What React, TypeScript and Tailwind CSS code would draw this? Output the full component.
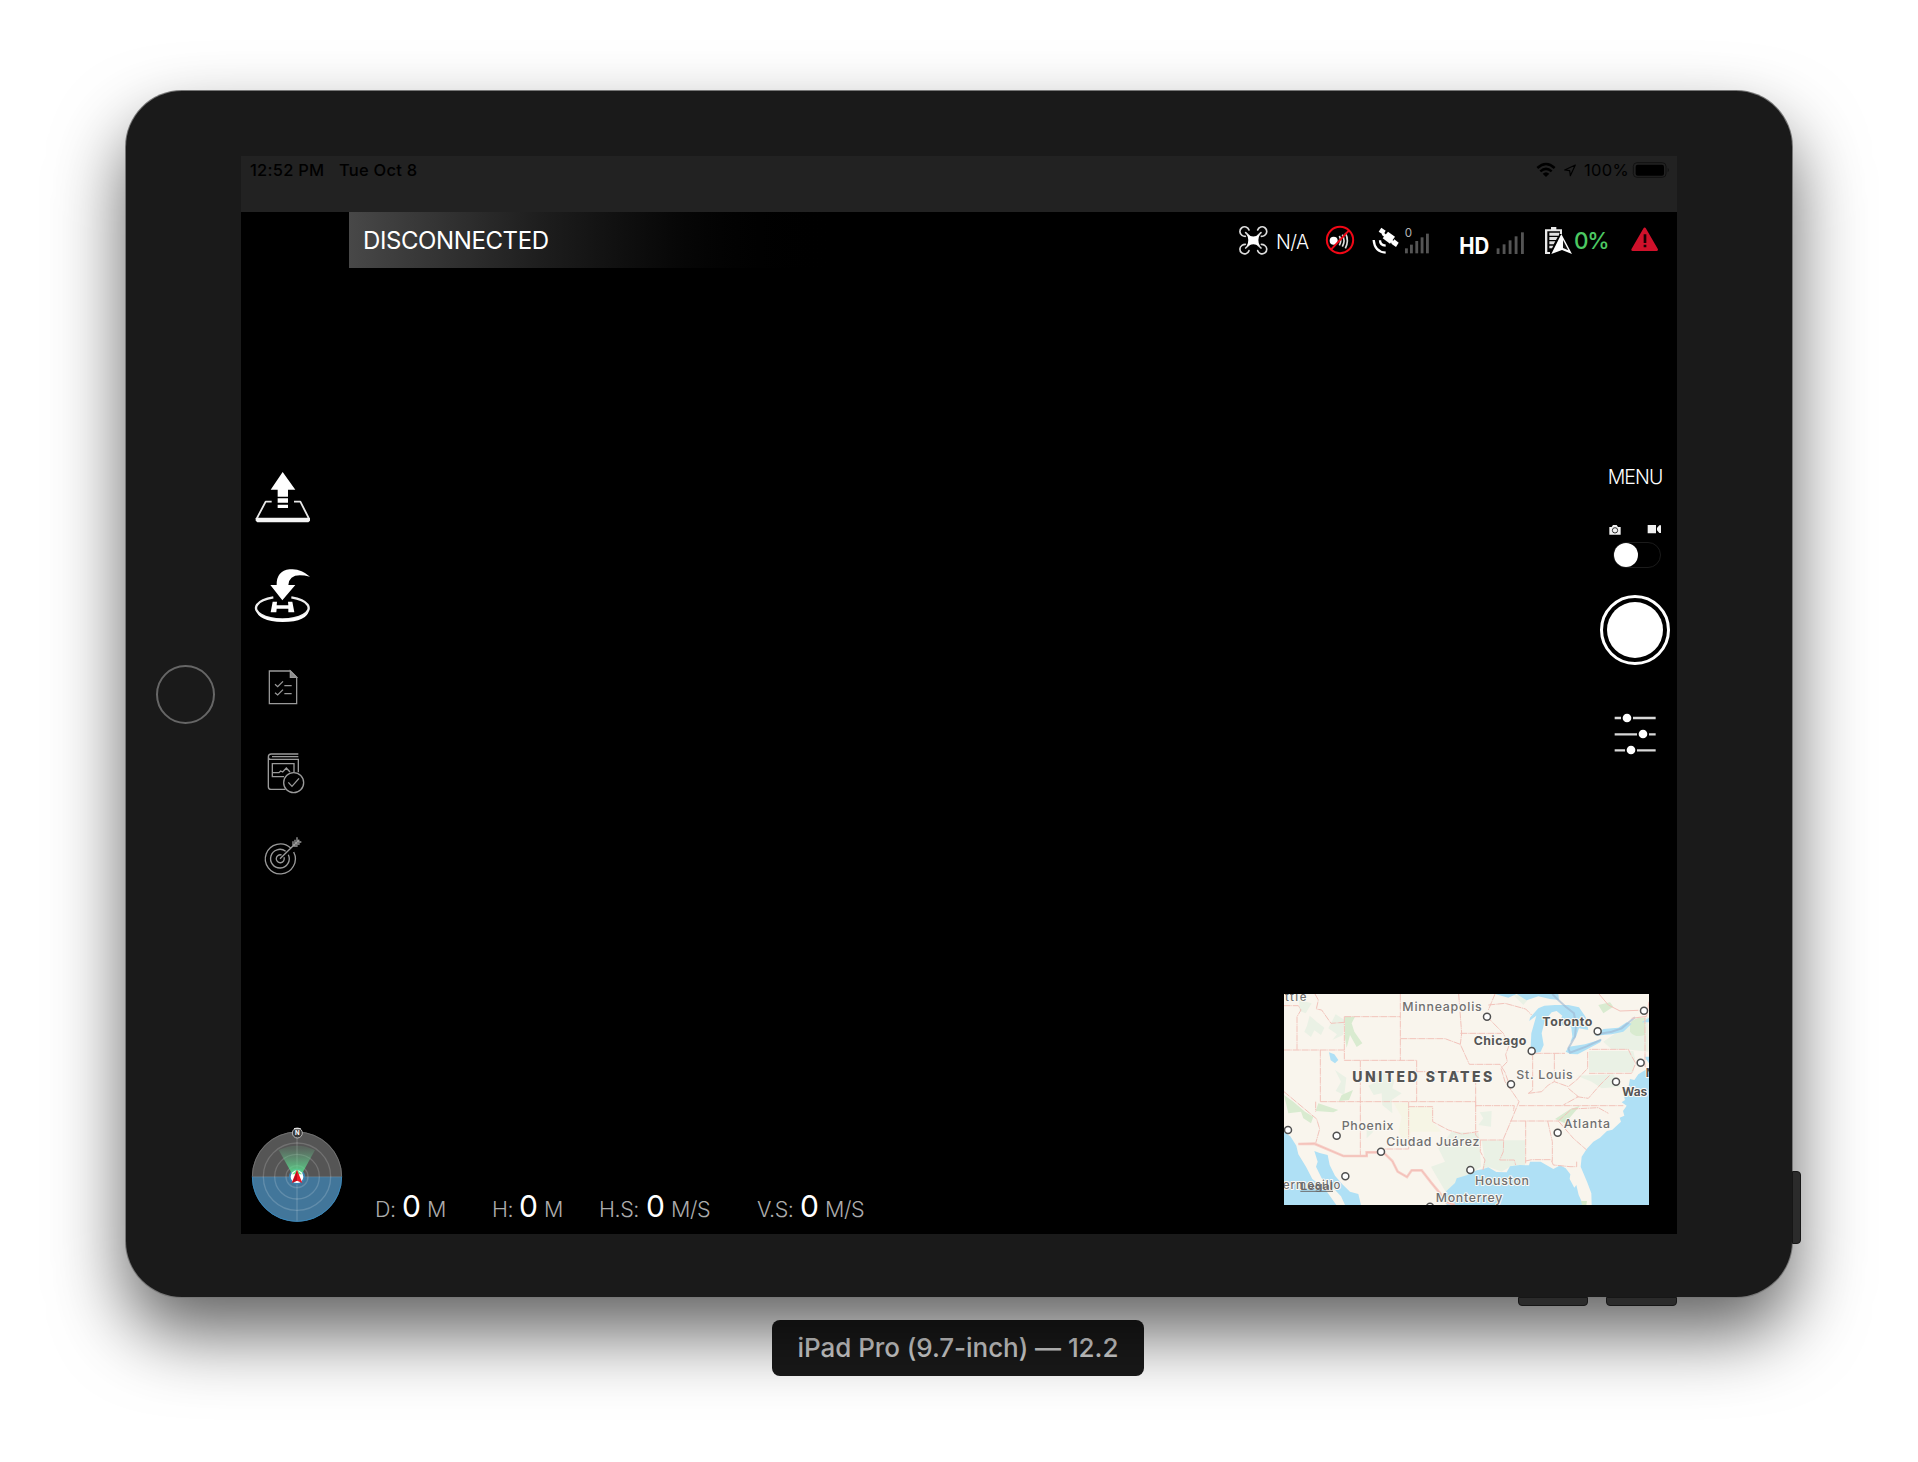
import React from "react";

function StatusBar() {
  return (
    <div className="flex h-14 items-start justify-between bg-[#222222] text-[16.5px] leading-[28px] font-medium text-black">
      <div className="flex gap-[14px] pl-[9px] tracking-[0.25px]">
        <span className="w-[75px] whitespace-nowrap">12:52 PM</span>
        <span className="whitespace-nowrap">Tue Oct 8</span>
      </div>
      <div className="flex">
        <svg width="50" height="28" viewBox="252 18 150 84" fill="none">
          <g stroke="#000" strokeWidth="7.5">
            <path d="M262 54 Q288 30 314 54" />
            <path d="M271 64 Q288 49 305 64" />
          </g>
          <path d="M278 71 Q288 62 298 71 L288 81Z" fill="#000" />
          <path d="M376 45 L344 60 L359 62 L361 77Z" stroke="#000" strokeWidth="3.5" strokeLinejoin="round" />
        </svg>
        <span className="w-[46px] whitespace-nowrap font-normal tracking-[0.3px]">100%</span>
        <svg width="47" height="28" viewBox="540 18 141 84" fill="none">
          <rect x="550" y="38" width="98" height="44" rx="11" stroke="#111" strokeWidth="3" />
          <rect x="557" y="44" width="85" height="33" rx="6" fill="#000" />
          <path d="M653 53 Q660 60 653 67Z" fill="#111" />
        </svg>
      </div>
    </div>
  );
}

function Bars({ items, base, fill }: { items: [number, number][]; base: number; fill: string }) {
  return (
    <g fill={fill}>
      {items.map(([x, y]) => (
        <rect key={x} x={x} y={y} width="8.5" height={base - y} />
      ))}
    </g>
  );
}

function Header() {
  return (
    <div className="flex h-14 justify-between">
      <div className="flex w-[500px] items-center bg-linear-to-r from-[#484848] via-[#1c1c1c] via-40% to-black pt-px pl-[14px] text-[24px] text-white">
        <span className="tracking-[-0.4px]">DISCONNECTED</span>
      </div>
      <div className="flex w-[441px]">
        <svg width="36" height="56" viewBox="48 6 108 168" fill="none">
          <g stroke="#dcdcdc" strokeWidth="5" strokeLinecap="round">
            <path d="M66 76 A14 14 0 1 1 87 60 M77 68 L92 82 M66 76 Q70 79 76 79" />
            <path d="M134 76 A14 14 0 1 0 113 60 M123 68 L108 82 M134 76 Q130 79 124 79" />
            <path d="M66 106 A14 14 0 1 0 87 122 M77 114 L92 100 M66 106 Q70 103 76 103" />
            <path d="M134 106 A14 14 0 1 1 113 122 M123 114 L108 100 M134 106 Q130 103 124 103" />
          </g>
          <path d="M80 73 Q100 86 120 73 Q110 91 120 109 Q100 97 80 109 Q90 91 80 73Z" fill="#fff" />
        </svg>
        <span className="w-[46px] pl-[4px] pt-[15px] text-[19.5px] leading-[30px] font-light tracking-[-0.6px] text-white">N/A</span>
        <svg width="44" height="56" viewBox="294 6 132 168" fill="none">
          <circle cx="341" cy="92" r="12" fill="#fff" />
          <path d="M358 78 Q366 92 358 106 M367 74 Q377 92 367 110 M376 69 Q388 92 376 115" stroke="#ddd" strokeWidth="5" />
          <circle cx="360" cy="90" r="39.5" stroke="#f00816" strokeWidth="6" />
          <path d="M387 61 L333 119" stroke="#f00816" strokeWidth="6" />
        </svg>
        <svg width="40" height="56" viewBox="426 6 120 168" fill="none">
          <g fill="#fff">
            <path d="M484 53 L497 62 L490 74 L476 65Z" />
            <path d="M504 65 L525 80 L510 101 L488 85Z" />
            <path d="M523 88 L536 98 L528 111 L514 101Z" />
            <path d="M490 67 L524 96 L518 102 L485 74Z" />
          </g>
          <path d="M480 91 Q480 106 497 107 M461 90 Q464 126 497 128" stroke="#fff" strokeWidth="7" />
        </svg>
        <svg width="34" height="56" viewBox="546 6 102 168">
          <text x="554" y="82" fill="#b4b4b4" fontSize="36" textLength="22" lengthAdjust="spacingAndGlyphs">0</text>
          <Bars items={[[555, 115], [570, 104], [586, 93], [602, 82], [618, 71]]} base={130} fill="#545454" />
        </svg>
        <svg width="56" height="56" viewBox="-42 186 168 168">
          <text x="28" y="311" fill="#fff" fontSize="69" fontWeight="700" textLength="90" lengthAdjust="spacingAndGlyphs">HD</text>
        </svg>
        <svg width="40" height="56" viewBox="126 186 120 168">
          <Bars items={[[140, 295], [158, 283], [176, 271], [194, 259], [213, 247]]} base={312} fill="#545454" />
        </svg>
        <svg width="42" height="56" viewBox="246 186 126 168" fill="none">
          <path d="M303 231H319V238H336V252H330V244H292V306H300V312H285V238H303Z" fill="#e8e8e8" />
          <path d="M298 248H329L326 257H298Z M298 261H323L318 270H298Z M298 274H316L311 283H298Z M298 287H310L306 295H298Z" fill="#e0e0e0" />
          <path d="M334 252 L366 312 L336 300 L304 312Z" fill="#fff" />
          <path d="M339 270 L355 301 L339 294Z" fill="#151515" />
        </svg>
        <span className="w-[46px] pt-[14px] text-[22.5px] leading-[30px] font-medium tracking-[-1.2px] text-[#4cc963]">0%</span>
        <svg width="57" height="56" viewBox="510 186 171 168">
          <path d="M584 237 L620 299 H548Z" fill="#d0112b" stroke="#d0112b" strokeWidth="8" strokeLinejoin="round" />
          <path d="M581 253H589V279H581Z M581 284H589V292H581Z" fill="#1a0004" />
        </svg>
      </div>
    </div>
  );
}

function SideRail() {
  return (
    <div className="flex w-[108px] flex-col pt-[238px]">
      <svg width="108" height="190" viewBox="15 0 324 570" fill="none">
        <g fill="#fff">
          <path d="M140 66 L178 119 H156V140H125V119H104Z" />
          <path d="M125 145H156V158H125Z M125 164H156V174H125Z" />
        </g>
        <path d="M107 155H89L62 206H219L193 155H174" stroke="#e8e8e8" strokeWidth="5.5" strokeLinejoin="round" />
        <path d="M59 204H222V212L217 217H64L59 212Z" fill="#f4f4f4" />
        <path d="M222 380 Q194 354 161 358 Q121 363 122 405 H103 L139 451 L178 405 H157 Q160 364 222 380Z" fill="#fff" />
        <path d="M112 442 A79 34 0 1 0 166 442" stroke="#eee" strokeWidth="7" />
        <path d="M60 479 Q68 504 140 507 Q210 504 219 479 Q215 515 140 516 Q65 513 60 479Z" fill="#fff" />
        <path d="M110 455H123L122 466H157L156 455H169L175 487H157V476H122L121 487H104Z" fill="#fff" />
      </svg>
      <svg className="mt-[20px]" width="108" height="240" viewBox="15 30 324 720" fill="none" stroke="#9a9a9a" strokeWidth="3.8">
        <path d="M100 63H163L182 82V161H100Z" />
        <path d="M163 63V82H182Z" fill="#8a8a8a" />
        <path d="M117 103 L125 110 L141 94 M117 128 L125 135 L141 119 M145 107H167 M145 131H167" />
        <g strokeWidth="4">
          <path d="M187 312H106Q97 312 97 321V410Q97 418 105 418H148 M187 367V328H104Q97 328 97 320 M108 320H187" />
          <path d="M144 380H109V341H174V366 M110 368H129L134 363L140 366L151 354L162 366" />
          <circle cx="173" cy="398" r="30" />
          <path d="M157 397 L168 409 L189 385" />
        </g>
        <g strokeWidth="4">
          <path d="M164 594 A45 45 0 1 0 173 606" />
          <path d="M149 604 A28 28 0 1 0 157 614" />
          <path d="M137 615 A12 12 0 1 0 144 622" />
          <path d="M132 626 L190 569 M171 588V574 M171 588H185 M177 582V569 M177 582H191 M183 576V562 M183 576H196" />
        </g>
      </svg>
      <svg className="mt-[223px]" width="108" height="110" viewBox="15 40 324 330" fill="none">
        <defs>
          <linearGradient id="beam" x1="0" y1="115" x2="0" y2="200" gradientUnits="userSpaceOnUse">
            <stop offset="0" stopColor="#6fc791" stopOpacity="0.15" />
            <stop offset="1" stopColor="#55e08b" />
          </linearGradient>
        </defs>
        <path d="M48 201 A135 135 0 0 1 318 201Z" fill="#555" />
        <path d="M48 201 A135 135 0 0 0 318 201Z" fill="#42769a" />
        <g stroke="#fff" strokeOpacity="0.17" strokeWidth="4">
          <circle cx="183" cy="201" r="101" />
          <circle cx="183" cy="201" r="67" />
          <circle cx="183" cy="201" r="33" />
          <path d="M183 68V334 M50 201H316" />
        </g>
        <path d="M49 201 A134 134 0 0 1 317 201" stroke="#707070" strokeWidth="3" />
        <path d="M49 201 A134 134 0 0 0 317 201" stroke="#3b88ba" strokeWidth="3" />
        <circle cx="183" cy="201" r="24" fill="#3d83b2" />
        <path d="M128 121 Q183 95 237 121 L197 194H169Z" fill="url(#beam)" />
        <circle cx="183" cy="201" r="19" fill="#fff" />
        <path d="M168 194 L183 180 L198 194Z" fill="#6ce78d" />
        <path d="M183 180 L199 220 L183 213 L167 220Z" fill="#ed1724" />
        <path d="M183 184V213L170 218Z" fill="#b80d1d" />
        <circle cx="184" cy="70" r="15" fill="#383838" stroke="#b5b5b5" strokeWidth="3" />
        <path d="M174 57H194" stroke="#ddd" strokeWidth="4" />
        <text x="184" y="77" fill="#fff" fontSize="18" fontWeight="700" textAnchor="middle">N</text>
      </svg>
    </div>
  );
}

function CameraControls() {
  return (
    <div className="flex w-[84px] flex-col items-center pt-[194px]">
      <span className="h-[30px] text-[19.5px] leading-[30px] font-light tracking-[-0.9px] text-white">MENU</span>
      <svg className="mt-[28px]" width="84" height="20" viewBox="39 210 252 60" fill="none">
        <path d="M88 231H95L99 225H110L114 231H122V254H88Z" fill="#f0f0f0" />
        <circle cx="105" cy="241" r="8" fill="#f0f0f0" stroke="#333" strokeWidth="3" />
        <path d="M203 225H228V250H203Z M231 234L238 226H243V249H238L231 241Z" fill="#f0f0f0" />
      </svg>
      <div className="mt-[2px] ml-[4px] h-[26px] w-12 rounded-full border border-[#1b1b1b]">
        <div className="h-6 w-6 rounded-full bg-white" />
      </div>
      <div className="mt-[27px] flex h-[70px] w-[70px] items-center justify-center rounded-full border-[3px] border-white">
        <div className="h-14 w-14 rounded-full bg-white" />
      </div>
      <svg className="mt-[44px]" width="84" height="50" viewBox="39 777 252 150">
        <path d="M104 804H123 M159 804H227 M104 853H171 M207 853H227 M104 901H135 M171 901H227" stroke="#d8d8d8" strokeWidth="7" />
        <g fill="#fff">
          <circle cx="141" cy="804" r="13" />
          <circle cx="189" cy="852" r="13" />
          <circle cx="153" cy="900" r="13" />
        </g>
      </svg>
    </div>
  );
}

function Reading({ label, unit, labelClass, groupClass }: { label: string; unit: string; labelClass: string; groupClass: string }) {
  return (
    <div className={"flex items-baseline whitespace-nowrap " + groupClass}>
      <span className={labelClass}>{label}</span>
      <span className="w-[25px] text-[30px] font-normal text-white">0</span>
      <span>{unit}</span>
    </div>
  );
}

function Telemetry() {
  return (
    <div className="flex items-baseline pt-[193px] pl-[26px] text-[21.5px] leading-[40px] font-light tracking-[-0.4px] text-[#acacac]">
      <Reading label="D:" unit="M" labelClass="w-[27px]" groupClass="w-[117px]" />
      <Reading label="H:" unit="M" labelClass="w-[27px]" groupClass="w-[107px]" />
      <Reading label="H.S:" unit="M/S" labelClass="w-[47px]" groupClass="w-[158px]" />
      <Reading label="V.S:" unit="M/S" labelClass="w-[43px]" groupClass="w-[120px]" />
    </div>
  );
}

type Label = [string, number, number, number, number, number];

const cityLabels: Label[] = [
  ["ttle", 30, 48, 64, 34, 500],
  ["Minneapolis", 382, 79, 238, 37, 500],
  ["Toronto", 802, 123, 150, 37, 700],
  ["Chicago", 596, 180, 158, 37, 700],
  ["UNITED STATES", 232, 291, 420, 42, 800],
  ["St. Louis", 724, 283, 169, 37, 500],
  ["Was", 1041, 334, 76, 36, 700],
  ["Phoenix", 200, 436, 155, 37, 500],
  ["Ciudad Juárez", 334, 484, 279, 37, 500],
  ["Atlanta", 866, 428, 139, 37, 500],
  ["Houston", 600, 600, 162, 37, 500],
  ["Monterrey", 482, 650, 200, 37, 500],
  ["ermosillo", 24, 613, 172, 34, 500],
];

const cityDots = [
  [636, 95], [968, 139], [770, 198], [708, 298], [1023, 290], [1097, 233], [1107, 77],
  [39, 435], [185, 452], [318, 500], [848, 443], [586, 555], [211, 574], [465, 665],
];

function MiniMap() {
  return (
    <svg className="mt-[1px] mr-7 shrink-0" width="365" height="211" viewBox="27 27 1095 633" fill="none">
      <rect x="27" y="27" width="1095" height="633" fill="#f9f5ed" />
      <g fill="#eaf1e5">
        <path d="M72 45 L110 55 L92 85 L74 78Z M104 92 L125 110 L148 128 L138 150 L118 136 L108 156 L88 140 L96 122Z" />
        <path d="M182 88 L208 104 L204 150 L172 165 L186 148 L160 130Z M300 265 L330 262 L358 285 L352 310 L380 325 L350 345 L352 385 L322 360 L320 325 L296 330 L280 302 L302 292Z" />
        <path d="M180 255 L214 278 L208 330 L182 318 L198 290Z M275 425 L295 440 L275 460Z M715 30 H770 L745 60Z M614 382 L650 378 L648 425 L610 420 L625 400Z" />
        <path d="M942 198 H1075 L1080 220 L1075 262 H942Z M985 170 L1060 118 L1120 95 V200 L1065 194 L1010 193Z M906 272 L1015 268 L1035 305 L980 310 L950 290Z" />
        <path d="M620 466 H750 V540 L705 545 L680 560 L640 545 L622 552 L628 520Z M468 545 L510 530 L490 490 L530 440 L612 445 L618 545 L575 572 L535 600 L512 620 L482 570Z" />
      </g>
      <path d="M355 353H400V365H472V410L500 440H408L395 485L370 440L380 395Z" fill="#f6f5e5" />
      <g fill="#d9ebd0">
        <path d="M210 95H240L230 115L238 140L262 175L245 186L225 150L215 188L210 160Z M200 330 L234 315 L222 345 L192 348Z M27 330 L55 350 L90 380 L115 395 L108 415 L85 400 L78 380 L40 385Z" />
        <path d="M130 355 L190 375 L175 382 L122 378Z M1065 115 Q1080 95 1110 98V150Q1080 160 1065 140Z M970 60 L1005 52 L1015 65 L985 85Z M885 373 L915 362 L870 415 L840 402Z" />
      </g>
      <g fill="#afe0f5">
        <path d="M1122 248 L1090 268 L1078 285 L1065 282 L1058 320 L1045 325 L1050 345 L1040 352 L1055 362 L1044 378 L1048 392 L1034 398 L1038 410 L1012 434 L996 438 L975 458 L955 470 L935 492 L920 515 L917 545 L936 590 L949 625 L950 660 H1122Z" />
        <path d="M515 660 L505 640 L514 618 L540 594 L545 580 L575 571 L605 556 L622 553 L640 547 L664 561 L695 562 L705 544 L718 542 L735 540 L762 541 L765 530 L797 530 L835 552 L856 541 L872 550 L886 568 L884 582 L898 608 L904 600 L911 630 L925 660Z" />
        <path d="M27 442 L46 454 L64 482 L70 508 L93 545 L112 582 L150 612 L184 660 H27Z" />
        <path d="M118 498 L134 504 L158 510 L164 540 L180 572 L202 598 L225 620 L250 627 L258 660 H210 L198 634 L166 600 L140 580 L123 545 L128 530Z" />
        <path d="M162 202 L178 208 L190 225 L180 235 L167 226Z" />
        <path d="M660 27 L700 38 L725 27 L755 46 L790 34 L825 42 L852 45 L850 27Z" />
        <path d="M790 70 L765 98 L763 108 L784 92 L769 145 L767 185 L778 205 L797 200 L806 180 L800 145 L810 105 L830 82 L845 78 L862 92 L851 115 L867 122 L876 105 L889 128 L892 155 L886 172 L903 155 L912 130 L940 135 L932 96 L912 67 L880 60 L840 60 L808 62Z" />
        <path d="M872 200 L882 185 L930 178 L980 163 L976 172 L945 188 L908 208 L886 207Z" />
        <path d="M960 152 L985 132 L1030 128 L1055 112 L1070 116 L1045 140 L1010 148Z M1100 112H1122V98Z M1108 215H1122V235Z" />
      </g>
      <path d="M1050 275 L1062 310 L1050 302Z" fill="#f9f5ed" />
      <path d="M918 648H936L934 660H921Z" fill="#d3e8c9" />
      <path d="M832 27 L850 45 L872 65 L897 85 L903 120 L900 155 L880 190 L885 203 L935 184 L978 164 M975 146 L1010 140 L1040 130 L1080 97" stroke="#9fb9d2" strokeWidth="6" opacity="0.65" />
      <g stroke="#f2c3bb" strokeWidth="3" strokeDasharray="20 2 3 2">
        <path d="M27 62H70L78 75L66 95V194 M120 27L130 45L124 72L140 75L168 115L208 112 M27 195H208 M208 95H376 M208 95V226 M208 226H425 M376 27V226 M136 195V350 M27 320L125 402L134 432L120 482 M136 350H602" />
        <path d="M256 226V515 M425 226V350 M376 161H510L556 178L583 238H675L690 262L700 290 M556 145H680 M551 27L560 145L556 178 M425 260H590L602 275V365 M602 350V365 M636 95L685 145L702 182L692 208L697 230L678 250L690 290L715 325L732 350L708 408L686 460L685 500L674 525 M122 350V380 M401 350V492H325 M401 365H473V410L520 435L560 447L610 440 M602 362V450L616 465V500L630 525L624 555" />
        <path d="M602 362H718L715 378 M616 465H686 M674 525H718L722 540 M732 362H1045 M706 408H850 M752 408V535 M752 528L770 524H828L835 540L885 545H905V530 M818 408L832 470V530 M850 408L895 460L935 495 M850 408L890 372L970 368L1000 385 M773 205V315L760 325 M838 205V290 M780 205H870 M760 325L800 320L820 300L838 290L880 305L905 285L938 250V200 M880 310L910 335L865 360 M905 335L940 340L975 300L1005 270 M942 265H1070L1082 235L1068 210L1060 193H942 M1110 97V245L1120 252 M660 27L640 75 M640 60L690 55L752 72L770 90" />
      </g>
      <path d="M70 477L118 476L205 513H275V502H325L352 528L368 560L396 576L410 556H440L468 592L495 625L510 650L540 660" stroke="#f7cec7" strokeWidth="8" />
      <path d="M70 477L118 476L205 513H275V502H325L352 528L368 560L396 576L410 556H440L468 592L495 625L510 650L540 660" stroke="#f0b6ae" strokeWidth="2" />
      <path d="M972 27L1000 60L1035 78L1090 76M1070 100L1115 94L1122 50" stroke="#f3c3bb" strokeWidth="3" />
      <g fill="#fff" stroke="#505050" strokeWidth="4.5">
        {cityDots.map(([x, y]) => (
          <circle key={x} cx={x} cy={y} r="10.5" />
        ))}
      </g>
      <g stroke="#fbf9f4" strokeWidth="6" strokeLinejoin="round" style={{ paintOrder: "stroke" }}>
        {cityLabels.map(([name, x, y, length, size, weight]) => (
          <text key={name} x={x} y={y} fontSize={size} fontWeight={weight} textLength={length} fill={weight > 600 ? "#555555" : "#707070"}>
            {name}
          </text>
        ))}
        <text x="1112" y="277" fontSize="36" fontWeight="700" fill="#555555">N</text>
      </g>
      <text x="76" y="614" fontSize="32" fontWeight="600" fill="#6b6b6b" textLength="98" lengthAdjust="spacingAndGlyphs">Legal</text>
      <path d="M76 619H174" stroke="#6b6b6b" strokeWidth="3" />
    </svg>
  );
}

export default function App() {
  return (
    <div className="flex h-[1462px] w-[1918px] flex-col items-center overflow-hidden bg-white pt-[91px] font-['Inter','Liberation_Sans',sans-serif]">
      <div className="relative flex h-[1206px] w-[1666px] shrink-0 rounded-[56px] bg-[#1a1a1a] pt-[65px] shadow-[0_0_0_1px_#777,0_36px_72px_rgba(0,0,0,0.62)]">
        <div className="absolute top-[1080px] -right-[9px] h-[73px] w-[9px] rounded-r-[4px] border border-[#161616] bg-[#2b2b2b]" />
        <div className="absolute -bottom-[9px] left-[1392px] h-[9px] w-[70px] rounded-b-[4px] border border-[#161616] bg-[#2b2b2b]" />
        <div className="absolute -bottom-[9px] left-[1480px] h-[9px] w-[71px] rounded-b-[4px] border border-[#161616] bg-[#2b2b2b]" />
        <div className="flex w-[115px] justify-center pt-[509px] pl-[3px]">
          <div className="h-[59px] w-[59px] rounded-full border-2 border-[#666]" />
        </div>
        <div className="flex h-[1078px] w-[1436px] flex-col bg-black">
          <StatusBar />
          <div className="flex h-[1022px]">
            <SideRail />
            <div className="flex w-[1328px] flex-col">
              <Header />
              <div className="flex h-[725px] justify-end">
                <CameraControls />
              </div>
              <div className="flex h-[241px] items-start justify-between">
                <Telemetry />
                <MiniMap />
              </div>
            </div>
          </div>
        </div>
      </div>
      <div className="mt-[23px] mr-[2px] flex h-14 w-[372px] shrink-0 items-center justify-center rounded-lg bg-[#1a1a1a] pb-[2px] text-[26px] font-medium whitespace-nowrap text-[#d6d6d6] shadow-[0_0_0_1px_rgba(255,255,255,0.25)]">
        <span className="tracking-[-0.06px]">iPad Pro (9.7-inch) — 12.2</span>
      </div>
    </div>
  );
}
